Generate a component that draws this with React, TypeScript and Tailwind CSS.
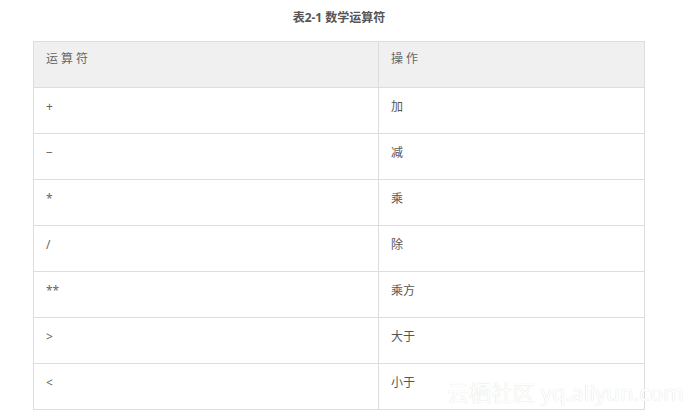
import React from "react";

const rows: [string, string][] = [
  ["+", "加"],
  ["−", "减"],
  ["*", "乘"],
  ["/", "除"],
  ["**", "乘方"],
  [">", "大于"],
  ["<", "小于"],
];

export default function App() {
  return (
    <div
      className="relative w-[683px] h-[414px] bg-white overflow-hidden"
      style={{ fontFamily: '"Noto Sans", "Noto Sans CJK SC", sans-serif' }}
    >
      <div className="ml-[33px] w-[612px] pt-[8px]">
        <div className="h-[20px] text-center text-[12px] leading-[20px] font-bold text-[#555]">
          表2-1 数学运算符
        </div>
        <div className="mt-[13px] border border-[#dddddd]">
          <div className="flex h-[46px] bg-[#f0f0f0] border-b border-[#dddddd]">
            <div className="w-[345px] border-r border-[#dddddd] pl-[12px] pt-[7px] text-[12px] leading-[20px] tracking-[3px] text-[#666]">
              运算符
            </div>
            <div className="flex-1 pl-[12px] pt-[7px] text-[12px] leading-[20px] tracking-[3px] text-[#666]">
              操作
            </div>
          </div>
          {rows.map(([a, b], i) => (
            <div
              key={i}
              className={
                i < rows.length - 1
                  ? "flex h-[46px] border-b border-[#dddddd]"
                  : "flex h-[45px]"
              }
            >
              <div className="w-[345px] border-r border-[#dddddd] pl-[12px] pt-[9px] text-[12px] leading-[20px] text-[#666]">
                {a}
              </div>
              <div className="flex-1 pl-[12px] pt-[9px] text-[12px] leading-[20px] text-[#555]">
                {b}
              </div>
            </div>
          ))}
        </div>
      </div>
      <div
        className="absolute left-[447px] top-[377px] text-[22px] leading-[30px] text-white whitespace-nowrap [text-shadow:0_0_1px_#d0d0d0]"
        style={{ fontFamily: '"Noto Sans", "Noto Sans CJK SC", sans-serif' }}
      >
        云栖社区 yq.aliyun.com
      </div>
    </div>
  );
}
